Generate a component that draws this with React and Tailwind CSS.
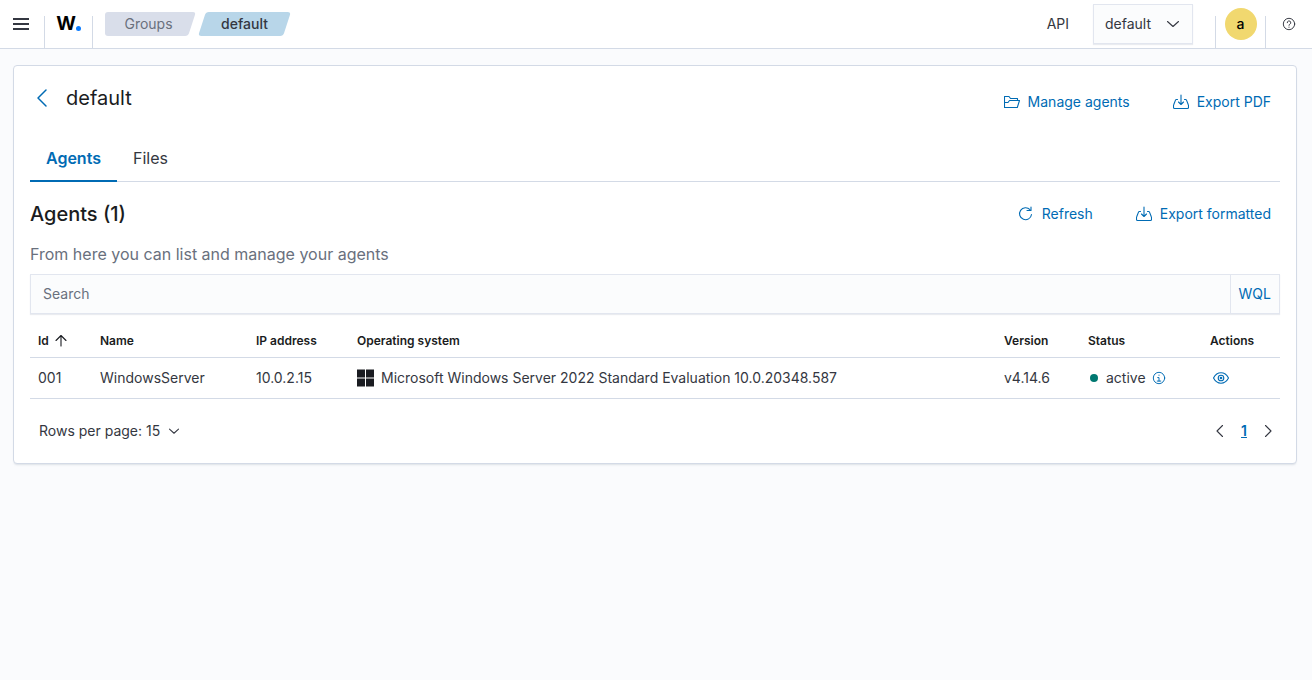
import { useState } from "react";

function Icon({ className = "", size = 16, children }) {
  return (
    <svg
      aria-hidden="true"
      width={size}
      height={size}
      viewBox="0 0 16 16"
      fill="none"
      stroke="currentColor"
      strokeWidth="1.100"
      strokeLinecap="round"
      strokeLinejoin="round"
      className={`shrink-0 ${className}`}
    >
      {children}
    </svg>
  );
}

function ExportIcon() {
  return (
    <Icon>
      <path d="M4.500 5.500H3.400a1 1 0 0 0-.9.600L.7 10.800a2 2 0 0 0-.2.700v2a1 1 0 0 0 1 1h13a1 1 0 0 0 1-1v-2a2 2 0 0 0-.2-.7l-1.800-4.700a1 1 0 0 0-.9-.6h-1.100" />
      <path d="M8 1v9.500M5.500 8 8 10.500 10.500 8" />
    </Icon>
  );
}

function FolderIcon() {
  return (
    <Icon>
      <path d="M.5 13.500v-11h4.500l1.500 2h7v2M.5 13.500h12.800l2.200-7H5.500l-1.500 2H.8" />
    </Icon>
  );
}

function RefreshIcon() {
  return (
    <Icon>
      <path d="M12 3.700A6 6 0 1 0 13.500 8.500" />
      <path d="M9 4.500h4v-3.500" />
    </Icon>
  );
}

function ActionButton({ icon, children }) {
  return (
    <button type="button" className="flex h-10 cursor-pointer items-center gap-2 pr-[9px] pl-2 text-[#006bb4]">
      {icon}
      {children}
    </button>
  );
}

function Header() {
  return (
    <header className="flex h-[49px] items-center border-b border-[#d3dae6] bg-white">
      <button type="button" aria-label="Toggle navigation" className="flex h-12 w-11 items-center pl-[13px]">
        <Icon className="text-[#343741]">
          <path d="M0 3h16M0 8h16M0 13h16" strokeWidth="2" strokeLinecap="butt" />
        </Icon>
      </button>
      <a
        href="#home"
        className="mt-4 flex h-8 w-[49px] items-start justify-center border-x border-[#d3dae6] text-[19px] leading-4 font-bold text-black"
      >
        W
        <span className="mt-[10px] h-[5px] w-[5px] rounded-full bg-[#0b7cff]" />
      </a>

      <nav aria-label="Breadcrumbs" className="ml-3 flex gap-2.5">
        <a
          href="#groups"
          className="relative isolate flex h-6 w-[87px] items-center justify-center text-[#69707d] before:absolute before:inset-y-0 before:right-0 before:left-4 before:-z-10 before:-skew-x-[18deg] before:rounded-[3px] before:bg-[#d9deea] after:absolute after:inset-y-0 after:left-0 after:-z-10 after:w-10 after:rounded-[3px] after:bg-[#d9deea]"
        >
          Groups
        </a>
        <span
          aria-current="page"
          className="relative isolate flex h-6 w-[85px] items-center justify-center font-medium text-[#343741] before:absolute before:inset-0 before:-z-10 before:-skew-x-[18deg] before:rounded-[3px] before:bg-[#b8d6e9]"
        >
          default
        </span>
      </nav>

      <label htmlFor="api" className="ml-auto">
        API
      </label>
      <div className="relative ml-6 text-[#343741]">
        <select
          id="api"
          className="h-10 w-[100px] appearance-none border border-[#e2e6ef] bg-[#fbfcfd] pl-[11px] shadow-[0_1px_1px_rgba(152,162,179,0.2)]"
        >
          <option>default</option>
        </select>
        <Icon className="pointer-events-none absolute top-3 right-3">
          <path d="M2.500 5.500 8 10.500l5.500-5" />
        </Icon>
      </div>
      <div className="mt-4 ml-[22px] flex h-8 w-[51px] border-x border-[#d3dae6]">
        <button
          type="button"
          aria-label="Account menu"
          className="mx-auto -mt-2 flex h-8 w-8 items-center justify-center rounded-full bg-[#f1d86f] font-medium text-black"
        >
          a
        </button>
      </div>
      <button type="button" aria-label="Help" className="flex h-12 w-[46px] items-center justify-center">
        <Icon size={14} className="text-[#343741]">
          <circle cx="8" cy="8" r="6.500" />
          <path d="M6 6.500a2 2 0 1 1 3 1.700c-.700.400-1 .600-1 1.300M8 11.500v.300" />
        </Icon>
      </button>
    </header>
  );
}

function AgentsTable() {
  const agents = [
    {
      id: "001",
      name: "WindowsServer",
      ip: "10.0.2.15",
      os: "Microsoft Windows Server 2022 Standard Evaluation 10.0.20348.587",
      version: "v4.14.6",
      status: "active",
    },
  ];

  return (
    <table className="w-full table-fixed text-left">
      <thead>
        <tr className="h-[43px] border-b border-[#d3dae6] text-xs text-[#1a1c21] [&>th]:px-2 [&>th]:pt-3 [&>th]:font-semibold">
          <th className="w-[62px]" aria-sort="ascending">
            <button type="button" className="flex items-center gap-1">
              Id
              <Icon>
                <path d="M8 13V3M3 7.500l5-5 5 5" />
              </Icon>
            </button>
          </th>
          <th className="w-[156px]">Name</th>
          <th className="w-[101px]">IP address</th>
          <th>Operating system</th>
          <th className="w-[84px]">Version</th>
          <th className="w-[122px]">Status</th>
          <th className="w-[78px]">Actions</th>
        </tr>
      </thead>
      <tbody>
        {agents.map((agent) => (
          <tr key={agent.id} className="h-[41px] border-b border-[#d3dae6] [&>td]:px-2">
            <td>{agent.id}</td>
            <td>{agent.name}</td>
            <td>{agent.ip}</td>
            <td>
              <div className="flex items-center gap-1.5">
                <svg aria-hidden="true" width="18" height="18" viewBox="0 0 18 18" className="shrink-0 fill-[#1a1c21]">
                  <path d="M0 .5h8v8H0zM9 .5h8v8H9zM0 9.500h8v8H0zM9 9.500h8v8H9z" />
                </svg>
                {agent.os}
              </div>
            </td>
            <td>{agent.version}</td>
            <td>
              <div className="flex items-center gap-1.5">
                <span className="mr-0.5 ml-0.5 h-2 w-2 rounded-full bg-[#007871]" />
                {agent.status}
                <Icon size={14} className="text-[#006bb4]">
                  <circle cx="8" cy="8" r="6.500" />
                  <path d="M6.500 7.500H8v4M6 11.500h4M8 4.600v.400" />
                </Icon>
              </div>
            </td>
            <td>
              <button type="button" aria-label="View agent" className="ml-[3px] flex text-[#006bb4]">
                <Icon>
                  <path d="M.500 8C2.200 4.800 4.700 2.800 8 2.800s5.800 2 7.500 5.200c-1.700 3.200-4.200 5.200-7.500 5.200S2.200 11.200.500 8z" />
                  <circle cx="8" cy="8" r="2.800" />
                  <circle cx="8" cy="8" r=".8" />
                </Icon>
              </button>
            </td>
          </tr>
        ))}
      </tbody>
    </table>
  );
}

export default function App() {
  const [query, setQuery] = useState("");

  return (
    <div className="min-h-screen bg-[#fafbfd] font-[Inter,sans-serif] text-sm text-[#343741]">
      <Header />

      <main className="mt-4 mr-[15px] ml-[13px] rounded border border-[#d3dae6] bg-white px-4 pb-4 shadow-[0_2px_2px_-1px_rgba(152,162,179,0.3)]">
        <div className="flex items-start justify-between pt-4">
          <div className="flex h-8 items-center gap-4">
            <button type="button" aria-label="Back" className="flex h-8 w-5 items-center justify-end text-[#006bb4]">
              <svg aria-hidden="true" width="16" height="20" viewBox="0 0 16 20" fill="none" stroke="currentColor" strokeWidth="1.500" strokeLinecap="round" strokeLinejoin="round">
                <path d="M12 2 4 10l8 8" />
              </svg>
            </button>
            <h1 className="text-xl text-[#1a1c21]">default</h1>
          </div>
          <div className="flex gap-[26px]">
            <ActionButton icon={<FolderIcon />}>Manage agents</ActionButton>
            <ActionButton icon={<ExportIcon />}>Export PDF</ActionButton>
          </div>
        </div>

        <div role="tablist" className="mt-3 flex h-12 border-b border-[#d3dae6] text-base">
          <button
            type="button"
            role="tab"
            aria-selected="true"
            className="-mb-px border-b-2 border-[#006bb4] px-4 pt-0.5 font-semibold text-[#006bb4]"
          >
            Agents
          </button>
          <button type="button" role="tab" aria-selected="false" className="px-4">
            Files
          </button>
        </div>

        <div className="mt-3 flex items-center justify-between">
          <h2 className="text-xl font-medium text-[#1a1c21]">Agents (1)</h2>
          <div className="flex gap-[26px]">
            <ActionButton icon={<RefreshIcon />}>Refresh</ActionButton>
            <ActionButton icon={<ExportIcon />}>Export formatted</ActionButton>
          </div>
        </div>
        <p className="mt-2 text-base text-[#69707d]">From here you can list and manage your agents</p>

        <div className="mt-2 flex h-10 border border-[#e2e6ef] bg-[#fbfcfd] shadow-[0_1px_1px_rgba(152,162,179,0.2)]">
          <input
            type="text"
            aria-label="Search"
            placeholder="Search"
            value={query}
            onChange={(e) => setQuery(e.target.value)}
            className="min-w-0 flex-1 px-3 outline-none placeholder:text-[#69707d]"
          />
          <button type="button" className="border-l border-[#e2e6ef] px-2 text-[#006bb4]">
            WQL
          </button>
        </div>

        <AgentsTable />

        <div className="mt-4 flex h-8 items-center justify-between pr-1 pl-[9px]">
          <button type="button" className="flex items-center gap-2">
            Rows per page: 15
            <Icon size={12}>
              <path d="M2 5.500 8 11l6-5.500" strokeWidth="1.400" />
            </Icon>
          </button>
          <nav aria-label="Pagination" className="flex items-center">
            <button type="button" aria-label="Previous page" className="flex">
              <Icon>
                <path d="M10.500 2.500 5 8l5.500 5.500" />
              </Icon>
            </button>
            <a href="#page-1" aria-current="page" className="w-8 text-center font-semibold text-[#006bb4] underline">
              1
            </a>
            <button type="button" aria-label="Next page" className="flex">
              <Icon>
                <path d="M5.500 2.500 11 8l-5.500 5.500" />
              </Icon>
            </button>
          </nav>
        </div>
      </main>
    </div>
  );
}
